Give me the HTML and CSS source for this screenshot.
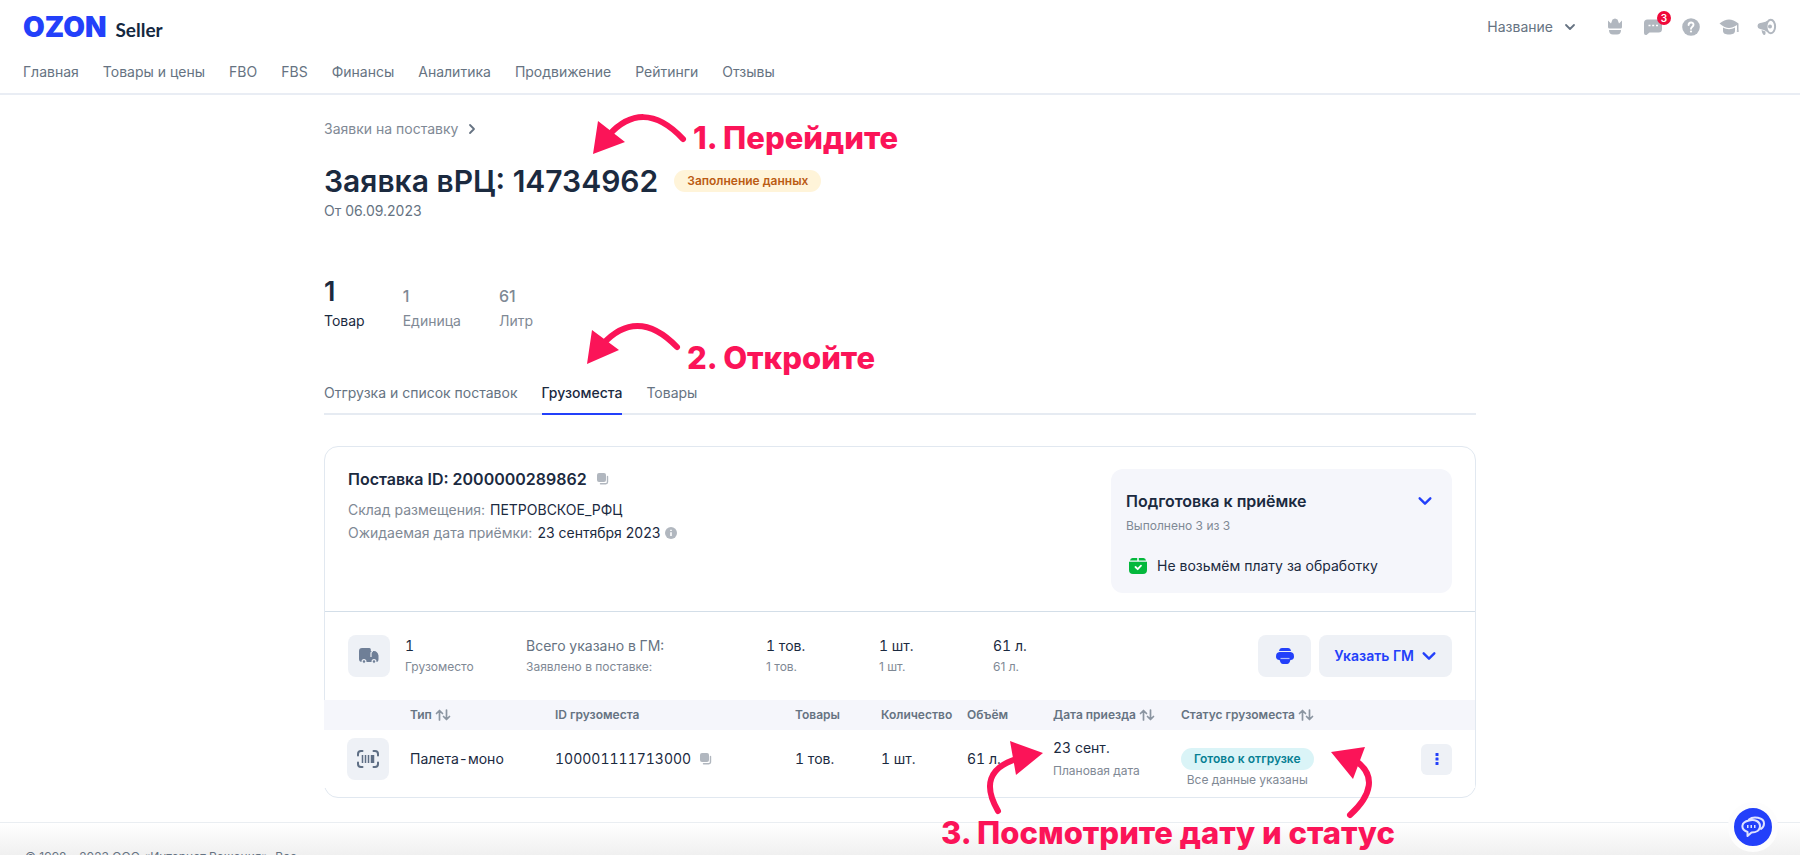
FILE: index.html
```html
<!DOCTYPE html>
<html lang="ru">
<head>
<meta charset="utf-8">
<title>Заявка вРЦ: 14734962 — Ozon Seller</title>
<link rel="stylesheet" href="styles.css">
</head>
<body>
<svg class="sprite" aria-hidden="true">
  <symbol id="chevron" viewBox="0 0 12 12"><path d="M2 4l4 4 4-4" fill="none" stroke="currentColor" stroke-width="1.800" stroke-linecap="round" stroke-linejoin="round"/></symbol>
  <symbol id="copy" viewBox="0 0 14 14"><rect x="1" y="1" width="9" height="9" rx="2"/><path d="M11.500 4.500v5.500a1.700 1.700 0 0 1-1.700 1.700H4.500" fill="none" stroke="currentColor" stroke-width="1.400" stroke-linecap="round"/></symbol>
  <symbol id="sort" viewBox="0 0 16 12"><path d="M4.500 11V2M1.500 4.500l3-3 3 3M11.500 1v9M8.500 7.500l3 3 3-3" fill="none" stroke="currentColor" stroke-width="1.700" stroke-linecap="round" stroke-linejoin="round"/></symbol>
</svg>
<div class="page">
  <header class="header">
    <div class="header-top">
      <a class="logo" href="#"><span class="logo-ozon">OZON</span><span class="logo-seller">Seller</span></a>
      <div class="tools">
        <button class="account" type="button">Название <svg class="icon-12"><use href="#chevron"/></svg></button>
        <button class="tool" type="button" aria-label="Premium"><svg viewBox="0 0 20 20"><path d="M3 3.500l3 3 1.500-4L10 1.500l2.500 1 1.500 4 3-3v6.500q0 1.500-1.500 1.500h-11Q3 11.500 3 10z"/><path d="M4 13h12c0 3-1.500 4.500-4 4.500H8c-2.500 0-4-1.500-4-4.500z"/></svg></button>
        <button class="tool" type="button" aria-label="Сообщения"><svg viewBox="0 0 20 20"><path d="M4.500 2.500h11a3.500 3.500 0 0 1 3.500 3.500v6a3.500 3.500 0 0 1-3.500 3.500H6.500l-3 2.500Q1 18.500 1 16V6a3.500 3.500 0 0 1 3.500-3.500z"/><path d="M5.500 8.500h2M9.200 8.500h2M13 8.500h2" stroke="#fff" stroke-width="1.400"/></svg><span class="count">3</span></button>
        <button class="tool" type="button" aria-label="Помощь"><svg viewBox="0 0 20 20"><circle cx="10" cy="10" r="8.800"/><path d="M7.600 8c0-3.300 4.900-3.300 4.900-.3C12.500 9.700 10 9.600 10 11.800" fill="none" stroke="#fff" stroke-width="1.900" stroke-linecap="round"/><circle cx="10" cy="14.500" r="1.100" fill="#fff"/></svg></button>
        <button class="tool" type="button" aria-label="Обучение"><svg viewBox="0 0 20 20"><path d="M.5 6.500C4 4 7 2.500 10 2.500s6 1.500 9.500 4V13h-1.500V8c-3 2-5.500 3-8 3s-6-1.500-9.500-4.500z"/><path d="M4 10.500c4 2.300 8 2.300 12 0V14c0 2.500-2.500 3.500-6 3.500S4 16.500 4 14z"/><circle cx="18.800" cy="14" r="1.100"/></svg></button>
        <button class="tool" type="button" aria-label="Новости"><svg viewBox="0 0 20 20"><path d="M10.500 3.500C8 5.500 5 5.500 3 6q-2.500.5-2.500 3T3 12q4 .500 7.500 3z"/><ellipse cx="13.800" cy="9.500" rx="4.300" ry="6.800" fill="#fff" stroke="currentColor" stroke-width="2"/><path d="M4.500 13l4 1.500v2.300q-.3 1.700-1.800 1.200-1.700-1-2.200-5z"/><circle cx="13" cy="9.500" r="2"/></svg></button>
      </div>
    </div>
    <nav class="nav">
      <a href="#">Главная</a><a href="#">Товары и цены</a><a href="#">FBO</a><a href="#">FBS</a><a href="#">Финансы</a><a href="#">Аналитика</a><a href="#">Продвижение</a><a href="#">Рейтинги</a><a href="#">Отзывы</a>
    </nav>
  </header>

  <main class="main">
    <a class="crumb" href="#">Заявки на поставку <svg class="icon-12 crumb-arrow"><use href="#chevron"/></svg></a>
    <div class="title-row">
      <h1>Заявка вРЦ: 14734962</h1>
      <span class="badge badge-warn">Заполнение данных</span>
    </div>
    <p class="date">От 06.09.2023</p>

    <div class="stats">
      <div class="stat stat-main"><b>1</b><span>Товар</span></div>
      <div class="stat"><b>1</b><span>Единица</span></div>
      <div class="stat"><b>61</b><span>Литр</span></div>
    </div>

    <div class="tabs" role="tablist">
      <button class="tab" type="button" role="tab">Отгрузка и список поставок</button>
      <button class="tab tab-active" type="button" role="tab" aria-selected="true">Грузоместа</button>
      <button class="tab" type="button" role="tab">Товары</button>
    </div>

    <section class="card">
      <div class="supply">
        <div class="supply-info">
          <h2>Поставка ID: 2000000289862 <svg class="icon-14"><use href="#copy"/></svg></h2>
          <p>Склад размещения: <strong>ПЕТРОВСКОЕ_РФЦ</strong></p>
          <p>Ожидаемая дата приёмки: <strong>23 сентября 2023</strong> <svg class="icon-12 info" viewBox="0 0 12 12"><circle cx="6" cy="6" r="6"/><path d="M6 5.300v3.700M6 2.700v1.300" stroke="#fff" stroke-width="1.600"/></svg></p>
        </div>
        <div class="prep">
          <button class="prep-head" type="button"><span>Подготовка к приёмке</span><svg class="icon-16 blue"><use href="#chevron"/></svg></button>
          <p class="prep-sub">Выполнено 3 из 3</p>
          <p class="prep-fee"><svg viewBox="0 0 18 16"><path d="M3.500 0h4.700v2.500H1Q1.300 0 3.500 0zM9.800 0h4.700Q16.700 0 17 2.500H9.800zM0 3.800h18V12q0 4-4 4H4q-4 0-4-4z" fill="#04b83c"/><path d="M6.500 9l2.200 2.200L12 7.700" fill="none" stroke="#fff" stroke-width="1.800" stroke-linecap="round" stroke-linejoin="round"/></svg>Не возьмём плату за обработку</p>
        </div>
      </div>

      <div class="summary">
        <span class="tile"><svg viewBox="0 0 20 16"><path d="M3 0h7.500q1.300 0 1.300 1.500V3H15q3.500 0 4.500 4.500V11q0 3-2 3H3q-3 0-3-3V3q0-3 3-3z"/><path d="M12 9V5.500q0-2 2-2" fill="none" stroke="#eef1f6" stroke-width="1.200"/><circle cx="5" cy="13.500" r="1.900" stroke="#eef1f6" stroke-width="1.200"/><circle cx="15" cy="13.500" r="1.900" stroke="#eef1f6" stroke-width="1.200"/></svg></span>
        <div class="pair"><b>1</b><span>Грузоместо</span></div>
        <div class="pair pair-label"><b>Всего указано в ГМ:</b><span>Заявлено в поставке:</span></div>
        <div class="pair"><b>1 тов.</b><span>1 тов.</span></div>
        <div class="pair"><b>1 шт.</b><span>1 шт.</span></div>
        <div class="pair"><b>61 л.</b><span>61 л.</span></div>
        <div class="actions">
          <button class="btn btn-print" type="button" aria-label="Печать"><svg viewBox="0 0 18 16"><path d="M3 3Q3.500 0 6 0h6q2.500 0 3 3z"/><path d="M3.500 4h11Q18 4.500 18 8.200q0 3.800-3.500 3.800h-11Q0 12 0 8.200 0 4.500 3.500 4z"/><path d="M3.500 11.500h11Q13.500 16 11 16H7q-2.500 0-3.500-4.500z"/><path d="M4.500 10.500h9" stroke="#eef1f6" stroke-width="1.200" opacity=".7"/></svg></button>
          <button class="btn" type="button">Указать ГМ <svg class="icon-16"><use href="#chevron"/></svg></button>
        </div>
      </div>

      <div class="table-wrap">
        <table class="table">
          <colgroup><col class="c-icon"><col class="c-type"><col class="c-id"><col class="c-num"><col class="c-num"><col class="c-num"><col class="c-date"><col></colgroup>
          <thead>
            <tr><th></th><th>Тип <svg class="sort"><use href="#sort"/></svg></th><th>ID грузоместа</th><th>Товары</th><th>Количество</th><th>Объём</th><th>Дата приезда <svg class="sort"><use href="#sort"/></svg></th><th>Статус грузоместа <svg class="sort"><use href="#sort"/></svg></th></tr>
          </thead>
          <tbody>
            <tr>
              <td class="cell-icon"><span class="tile"><svg class="barcode" viewBox="0 0 22 18"><path d="M1 5.500V4q0-3 3-3h1.500M16.500 1H18q3 0 3 3v1.500M21 12.500V14q0 3-3 3h-1.500M5.500 17H4q-3 0-3-3v-1.500" fill="none" stroke="currentColor" stroke-width="2" stroke-linecap="round"/><path d="M5.500 5v8M8.500 5v8M11.500 5v8" stroke="currentColor" stroke-width="1.500"/><path d="M15.500 5v8" stroke="currentColor" stroke-width="3.500"/></svg></span></td>
              <td>Палета-моно</td>
              <td>100001111713000 <svg class="icon-14 copy"><use href="#copy"/></svg></td>
              <td>1 тов.</td>
              <td>1 шт.</td>
              <td>61 л.</td>
              <td><div class="when">23 сент.<small>Плановая дата</small></div></td>
              <td><div class="status"><div class="status-text"><span class="badge badge-ready">Готово к отгрузке</span><small>Все данные указаны</small></div><button class="more" type="button" aria-label="Ещё"><svg viewBox="0 0 4 12"><rect x=".5" width="3" height="3" rx=".5"/><rect x=".5" y="4.500" width="3" height="3" rx=".5"/><rect x=".5" y="9" width="3" height="3" rx=".5"/></svg></button></div></td>
            </tr>
          </tbody>
        </table>
      </div>
    </section>

    <div class="notes">
      <svg class="arrows" viewBox="0 0 1152 760">
        <g fill="none" stroke="#fb1458" stroke-width="6" stroke-linecap="round">
          <path d="M285 40C306 17 331 14 359 44"/>
          <path d="M279 249C300 226 325 223 353 252"/>
          <path d="M692 664C665 673 659 690 674 716"/>
          <path d="M1032 666C1052 680 1048 700 1026 720"/>
        </g>
        <g fill="#fb1458"><path d="M269 59l5-33 27 21zM263 269l5-34 27 20zM719 658l-33-12 6 34zM1007 657l34-5-12 32z"/></g>
      </svg>
      <span class="note note-open">1. Перейдите</span>
      <span class="note note-tab">2. Откройте</span>
      <span class="note note-check">3. Посмотрите дату и статус</span>
    </div>
  </main>

  <footer class="footer">© 1998 – 2023 ООО «Интернет Решения». Все</footer>
  <button class="chat" type="button" aria-label="Чат поддержки"><svg viewBox="0 0 24 22"><path d="M8 3.500C12 0 23 1 23 7.500c0 3-1.500 4.500-3 5.500M8 4.500c6-1.500 11 1 11 5.500s-4 6.500-8.500 6.500L6.500 20v-4C-1 13 0 6 8 4.500z" fill="none" stroke="#dfe3ff" stroke-width="2" stroke-linecap="round" stroke-linejoin="round"/><path d="M6 10.500h1.500M9.500 10.500H11M13 10.500h1.500" stroke="#dfe3ff" stroke-width="3"/></svg></button>
</div>
</body>
</html>
```
FILE: styles.css
```css
* { box-sizing: border-box; }

body {
  margin: 0;
  background: #fff;
  color: #1b2a3f;
  font: 14px/20px Inter, "Noto Sans", sans-serif;
}

h1, h2, p { margin: 0; }
a { color: inherit; text-decoration: none; }
button { padding: 0; border: 0; background: none; color: inherit; font: inherit; cursor: pointer; }
svg { display: block; fill: currentColor; flex: none; }
.sprite { position: absolute; width: 0; height: 0; }
.icon-12 { width: 12px; height: 12px; }
.icon-14 { width: 14px; height: 14px; }
.icon-16 { width: 16px; height: 16px; }

.page {
  position: relative;
  display: flex;
  flex-direction: column;
  height: 100vh;
  overflow: hidden;
}

/* Header */
.header { border-bottom: 2px solid #e9edf4; color: #667382; }
.header-top { display: flex; justify-content: space-between; align-items: center; height: 54px; padding: 0 23px; }
.logo { display: flex; align-items: baseline; gap: 9px; }
.logo-ozon { color: #2340fa; font-size: 28px; font-weight: 900; line-height: 32px; }
.logo-seller { color: #14283f; font-family: Lato, sans-serif; font-size: 19px; font-weight: 700; }
.tools { display: flex; align-items: center; gap: 18px; }
.account { display: flex; align-items: center; gap: 11px; margin-right: 11px; }
.tool { position: relative; color: #b1b7bf; }
.tool svg { width: 20px; height: 20px; }
.count {
  position: absolute;
  top: -6px;
  right: -8px;
  width: 14px;
  height: 14px;
  border-radius: 50%;
  background: #f0093a;
  color: #fff;
  font-size: 10px;
  font-weight: 600;
  line-height: 14px;
  text-align: center;
}
.nav { display: flex; gap: 24px; height: 39px; padding: 8px 23px 0; }

/* Main column */
.main {
  position: relative;
  z-index: 1;
  flex: none;
  width: 100%;
  max-width: 1152px;
  margin: 0 auto;
  padding: 24px 0;
}
.crumb { display: flex; align-items: center; gap: 8px; color: #7f8995; }
.crumb-arrow { transform: rotate(-90deg); color: #667382; }
.title-row { display: flex; align-items: center; gap: 16px; margin-top: 22px; }
h1 { font-size: 30px; font-weight: 600; line-height: 40px; }
.badge { border-radius: 12px; padding: 0 13px; font-size: 12px; font-weight: 600; line-height: 22px; }
.badge-warn { background: #fff4d9; color: #bb5c14; }
.badge-ready { background: #daf4f7; color: #077f93; }
.date { color: #667382; }

.stats { display: flex; align-items: flex-end; gap: 38px; margin-top: 56px; color: #7f8995; }
.stat { display: flex; flex-direction: column; gap: 4px; }
.stat b { font-size: 16px; font-weight: 500; line-height: 22px; }
.stat-main { color: #1b2a3f; }
.stat-main b { font-size: 27px; font-weight: 600; line-height: 30px; }

.tabs { display: flex; gap: 24px; margin-top: 52px; box-shadow: inset 0 -2px #e6ebf2; }
.tab { padding-bottom: 12px; color: #667382; }
.tab-active { color: #1b2a3f; font-weight: 500; box-shadow: inset 0 -2px #2340fa; }

/* Supply card */
.card {
  margin-top: 31px;
  padding-bottom: 9px;
  border: 1px solid #e1e8f0;
  border-radius: 14px;
}
.supply { display: flex; justify-content: space-between; padding: 22px 23px 18px; border-bottom: 1px solid #d3dee8; }
.supply-info { color: #7f8995; line-height: 23px; }
.supply-info p { display: flex; align-items: center; gap: 5px; }
h2 { display: flex; align-items: center; gap: 9px; margin-bottom: 9px; color: #1b2a3f; font-size: 16px; font-weight: 600; line-height: 20px; }
h2 svg, .copy, .info { color: #b1b7bf; }
strong { color: #1b2a3f; font-weight: 400; }
.prep { width: 341px; padding: 21px 15px 17px; border-radius: 12px; background: #f5f6fb; }
.prep-head { display: flex; justify-content: space-between; align-items: center; width: 100%; padding-right: 4px; font-size: 16px; font-weight: 600; line-height: 22px; }
.prep-sub { margin-top: 4px; color: #7f8995; font-size: 12px; }
.prep-fee { display: flex; align-items: center; gap: 10px; margin-top: 20px; padding-left: 3px; }
.prep-fee svg { width: 18px; height: 16px; }
.blue { color: #2340fa; }

.summary { display: grid; grid-template-columns: 57px 121px 240px 113px 114px 1fr auto; align-items: center; padding: 23px; }
.tile { display: flex; align-items: center; justify-content: center; width: 42px; height: 42px; border-radius: 8px; background: #eef1f6; color: #6f7f97; }
.tile svg { width: 20px; height: 16px; }
.tile .barcode { width: 22px; height: 18px; color: #5e6e84; }
.pair { display: flex; flex-direction: column; white-space: nowrap; }
.pair b { font-weight: 400; line-height: 22px; font-variant-numeric: tabular-nums; }
.pair span { color: #7f8995; font-size: 12px; }
.pair-label { color: #667382; }
.actions { display: flex; gap: 8px; }
.btn { display: flex; align-items: center; justify-content: center; gap: 7px; height: 42px; padding: 0 15px; border-radius: 8px; background: #eef1f6; color: #2340fa; font-weight: 600; }
.btn-print { width: 53px; }
.btn-print svg { width: 18px; height: 16px; flex: none; }

.table-wrap { margin-left: -1px; background: #fff; }
.table { width: 100%; border-collapse: collapse; table-layout: fixed; }
.c-icon { width: 86px; }
.c-type { width: 145px; }
.c-id { width: 240px; }
.c-num { width: 86px; }
.c-date { width: 128px; }
th { height: 30px; padding: 0; background: #f5f6fb; color: #667382; font-size: 12px; font-weight: 600; text-align: left; white-space: nowrap; }
td { height: 58px; padding: 0; white-space: nowrap; font-variant-numeric: tabular-nums; }
.cell-icon { padding-left: 23px; }
.sort { display: inline-block; width: 16px; height: 12px; vertical-align: -2px; color: #8b95a1; }
.copy { display: inline-block; margin-left: 4px; vertical-align: -2px; }
small { color: #7f8995; font-size: 12px; line-height: 20px; }
.when { display: flex; flex-direction: column; gap: 3px; }
.status { display: flex; justify-content: space-between; align-items: center; padding-right: 23px; }
.status-text { display: flex; flex-direction: column; align-items: center; gap: 2px; padding-top: 18px; }
.status-text small { line-height: 16px; }
.more { display: flex; align-items: center; justify-content: center; width: 31px; height: 31px; border-radius: 6px; background: #eef1f6; color: #2340fa; }
.more svg { width: 4px; height: 12px; }

/* Annotations over the page */
.notes { position: absolute; inset: 0; pointer-events: none; }
.arrows { position: absolute; top: 0; left: 0; width: 1152px; height: 760px; }
.note { position: absolute; color: #fb1458; font-size: 31px; font-weight: 800; line-height: 36px; white-space: nowrap; }
.note-open { top: 25px; left: 369px; }
.note-tab { top: 245px; left: 363px; }
.note-check { top: 720px; left: 617px; }

/* Footer */
.footer {
  flex: none;
  height: 64px;
  padding: 24px 25px;
  border-top: 1px solid #eaeef2;
  background: linear-gradient(#fff, #eee 36px);
  color: #667382;
  font-size: 12px;
}
.chat {
  position: absolute;
  right: 22px;
  bottom: 3px;
  display: flex;
  align-items: center;
  justify-content: center;
  width: 50px;
  height: 50px;
  border: 6px solid #fdfdfd;
  border-radius: 50%;
  background: #2340fa;
}
.chat svg { width: 24px; height: 22px; }
```
